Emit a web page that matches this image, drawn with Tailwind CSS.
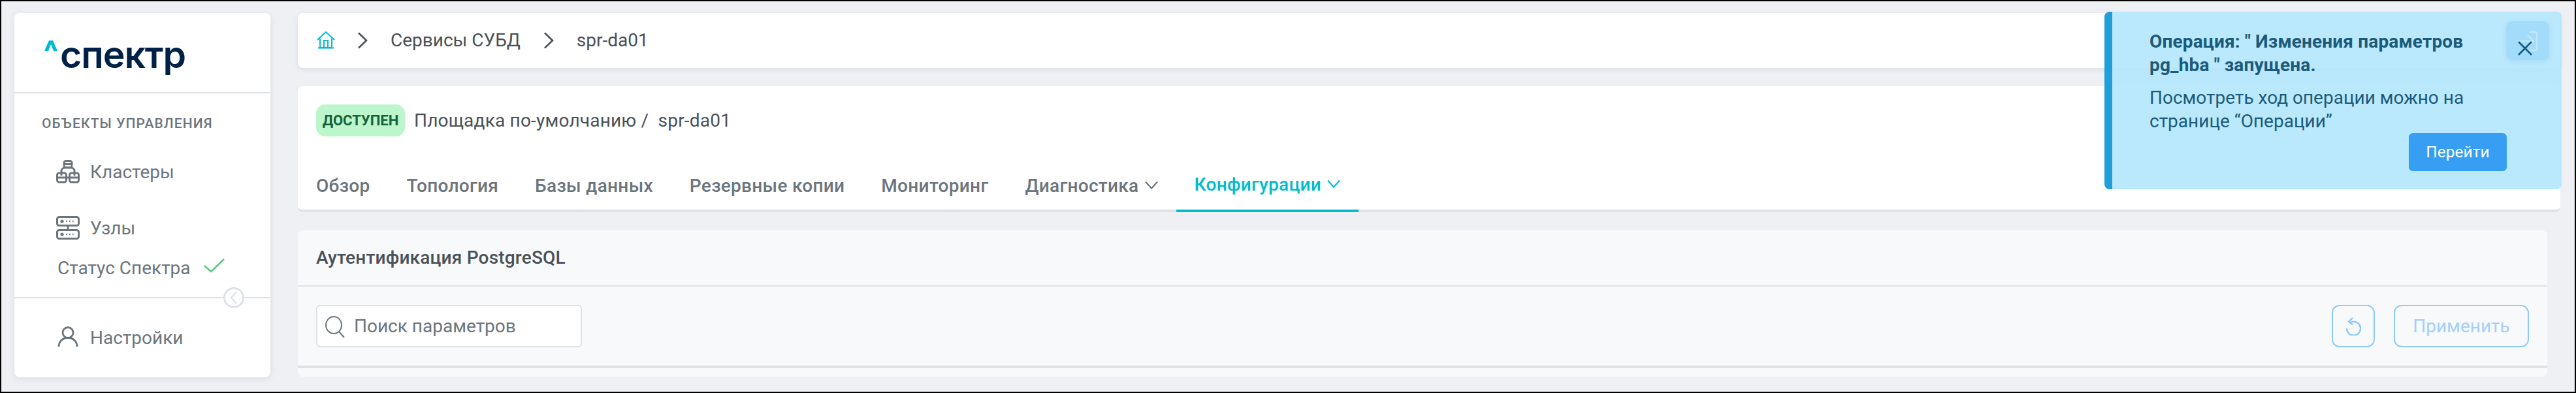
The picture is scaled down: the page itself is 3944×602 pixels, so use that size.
<!DOCTYPE html>
<html lang="ru">
<head>
<meta charset="utf-8"/>
<title>Спектр - spr-da01</title>
<script src="https://cdn.jsdelivr.net/npm/@tailwindcss/browser@4"></script>
</head>
<body class="font-[Roboto,sans-serif]">
<div class="relative flex w-[3944px] h-[602px] border-2 border-black bg-[#eef0f4] pl-[20px] pt-[18px] overflow-hidden">

  <!-- sidebar -->
  <aside class="w-[392px] h-[558px] shrink-0 rounded-[8px] bg-white shadow-[0_2px_10px_rgba(60,70,90,0.12)] flex flex-col text-[28px] text-[#6c757d]">
    <div class="h-[123px] shrink-0 border-b-2 border-[#dee2e6] flex items-start pl-[46px] pt-[34px]">
      <svg class="w-[20px] h-[16px] mt-[8px]" viewBox="0 0 20 16"><path d="M0 16 L7 0 L13 0 L20 16 L14 16 L10 6 L6 16 Z" fill="#00bcce"/></svg>
      <span class="ml-[4px] text-[57px] leading-[60px] font-[Inter,sans-serif] font-semibold text-[#002147] tracking-[-1px]">спектр</span>
    </div>
    <div class="pl-[42px] pt-[34px] text-[21px] leading-[24px] font-medium tracking-[1.1px]">ОБЪЕКТЫ УПРАВЛЕНИЯ</div>
    <div class="flex items-center pl-[64px] mt-[44px] h-[36px] gap-[16px]">
      <svg class="w-[36px] h-[36px]" viewBox="0 0 36 36" fill="none" stroke="#6c757d" stroke-width="3"><rect x="12" y="1.5" width="12" height="10" rx="3"/><path d="M12 6.5h12" /><path d="M8 24v-7a5 5 0 0 1 5-5h10a5 5 0 0 1 5 5v7"/><rect x="1.5" y="20" width="14" height="14" rx="3"/><rect x="20.5" y="20" width="14" height="14" rx="3"/><path d="M1.5 27h14M20.5 27h14M15.5 27h5"/></svg>
      <span class="leading-[36px] mt-[2px]">Кластеры</span>
    </div>
    <div class="flex items-center pl-[64px] mt-[50px] h-[36px] gap-[16px]">
      <svg class="w-[36px] h-[36px]" viewBox="0 0 36 36" fill="none" stroke="#6c757d" stroke-width="3"><rect x="1.5" y="1.5" width="33" height="13" rx="3"/><rect x="1.5" y="21.5" width="33" height="13" rx="3"/><path d="M18 14.5v7"/><circle cx="9" cy="8" r="2.6" fill="#6c757d" stroke="none"/><circle cx="9" cy="28" r="2.6" fill="#6c757d" stroke="none"/><path d="M15 8h1.6M20 8h1.6M25 8h1.6M15 28h1.6M20 28h1.6M25 28h1.6" stroke-width="2.4"/></svg>
      <span class="leading-[36px] mt-[2px]">Узлы</span>
    </div>
    <div class="flex items-center pl-[66px] mt-[26px] h-[36px]">
      <span class="leading-[36px]">Статус Спектра</span>
      <svg class="ml-[20px] mb-[8px] w-[32px] h-[22px]" viewBox="0 0 32 22" fill="none" stroke="#5cc982" stroke-width="2.6"><path d="M1 11l10 9L31 1"/></svg>
    </div>
    <div class="relative mt-[26px] border-t-2 border-[#dee2e6]">
      <div class="absolute left-[320px] top-[-17px] w-[32px] h-[32px] rounded-full border-[3px] border-[#dee2e6] bg-white flex items-center justify-center">
        <svg class="w-[12px] h-[20px]" viewBox="0 0 12 20" fill="none" stroke="#dee2e6" stroke-width="2.4"><path d="M10 1L2 10l8 9"/></svg>
      </div>
    </div>
    <div class="flex items-center pl-[66px] mt-[42px] h-[36px] gap-[18px]">
      <svg class="w-[32px] h-[32px] mt-[-2px]" viewBox="0 0 32 32" fill="none" stroke="#6c757d" stroke-width="2.8"><circle cx="16" cy="9.5" r="8"/><path d="M2 31c0-8 6-13.500 14-13.500S30 23 30 31"/></svg>
      <span class="leading-[36px] mt-[2px]">Настройки</span>
    </div>
  </aside>

  <!-- content -->
  <main class="ml-[42px] w-[3464px] flex flex-col text-[28px] text-[#495057]">
    <div class="h-[84px] shrink-0 rounded-[8px] bg-white shadow-[0_2px_8px_rgba(60,70,90,0.10)] flex items-center pl-[29px]">
      <svg class="w-[28px] h-[28px] mt-[-2px]" viewBox="0 0 28 28" fill="none" stroke="#00bcce" stroke-width="2"><path d="M1 14L14 2l13 12"/><path d="M5 12v14h18V12"/><path d="M11 26V15h6v11M2 26.500h24"/></svg>
      <svg class="ml-[34px] w-[16px] h-[26px]" viewBox="0 0 16 26" fill="none" stroke="#495057" stroke-width="2.600"><path d="M2 1.500L14 13 2 24.500"/></svg>
      <span class="ml-[35px] leading-[30px]">Сервисы СУБД</span>
      <svg class="ml-[35px] w-[16px] h-[26px]" viewBox="0 0 16 26" fill="none" stroke="#495057" stroke-width="2.600"><path d="M2 1.500L14 13 2 24.500"/></svg>
      <span class="ml-[35px] leading-[30px]">spr-da01</span>
    </div>

    <div class="mt-[28px] h-[193px] shrink-0 rounded-[8px] bg-white border-b-4 border-[#dee2e6] flex flex-col">
      <div class="flex items-center pl-[28px] pt-[28px]">
        <span class="w-[136px] h-[49px] rounded-[14px] bg-[#bdf5cc] text-[#14633a] text-[22px] font-bold flex items-center justify-center">ДОСТУПЕН</span>
        <span class="ml-[14px] tracking-[0.2px]">Площадка по-умолчанию /&nbsp; spr-da01</span>
      </div>
      <div class="flex mt-[auto] h-[80px] mb-[-4px] font-medium text-[#6c757d] tracking-[0.3px]">
        <span class="px-[28px] flex items-center">Обзор</span>
        <span class="px-[28px] flex items-center">Топология</span>
        <span class="px-[28px] flex items-center">Базы данных</span>
        <span class="px-[28px] flex items-center">Резервные копии</span>
        <span class="px-[28px] flex items-center">Мониторинг</span>
        <span class="px-[28px] flex items-center gap-[9px]">Диагностика
          <svg class="w-[20px] h-[13px] mt-[-4px]" viewBox="0 0 20 13" fill="none" stroke="#6c757d" stroke-width="2.200"><path d="M1 1.500l9 10 9-10"/></svg>
        </span>
        <span class="px-[28px] flex items-center gap-[9px] text-[#00bcce] border-b-4 border-[#00bcce]">Конфигурации
          <svg class="w-[20px] h-[13px] mt-[-4px]" viewBox="0 0 20 13" fill="none" stroke="#00bcce" stroke-width="2.200"><path d="M1 1.500l9 10 9-10"/></svg>
        </span>
      </div>
    </div>

    <div class="mt-[28px] mr-[20px] h-[224px] shrink-0 rounded-[8px] bg-[#f8f9fa] flex flex-col">
      <div class="h-[86px] shrink-0 border-b-2 border-[#dee2e6] pl-[28px] flex items-center font-medium tracking-[0.2px]">Аутентификация PostgreSQL</div>
      <div class="h-[125px] shrink-0 border-b-4 border-[#dee2e6] flex items-start justify-between pl-[28px] pr-[28px] pt-[28px]">
        <div class="w-[407px] h-[65px] rounded-[6px] border-2 border-[#dee2e6] bg-white flex items-center pl-[12px] text-[#6c757d]">
          <svg class="w-[30px] h-[34px] mt-[2px]" viewBox="0 0 30 34" fill="none" stroke="#6c757d" stroke-width="2"><ellipse cx="13" cy="14" rx="12" ry="13"/><path d="M21 24l8 9"/></svg>
          <span class="ml-[14px]">Поиск параметров</span>
        </div>
        <div class="flex gap-[29px]">
          <div class="w-[66px] h-[65px] rounded-[12px] border-2 border-[#90caf9] flex items-center justify-center">
            <svg class="w-[24px] h-[28px]" viewBox="0 0 24 28" fill="none" stroke="#90caf9" stroke-width="2.500"><path d="M6 9a10.500 10.500 0 1 1-4 8"/><path d="M11 1L5 6.500l6 5"/></svg>
          </div>
          <div class="w-[207px] h-[65px] rounded-[12px] border-2 border-[#90caf9] flex items-center justify-center text-[#a3cffa]">Применить</div>
        </div>
      </div>
    </div>
  </main>

  <!-- toast -->
  <div class="absolute left-[3220px] top-[16px] w-[700px] h-[272px] rounded-[8px] border-l-[12px] border-[#219fd9] bg-[#b3e5fc]/90 text-[28px] leading-[36px] text-[#1b5a7a] pl-[57px] pt-[28px]">
    <div class="w-[500px] font-bold tracking-[0.15px]">Операция: " Изменения параметров pg_hba " запущена.</div>
    <div class="w-[500px] mt-[14px]">Посмотреть ход операции можно на странице “Операции”</div>
    <div class="absolute left-[454px] top-[186px] w-[150px] h-[58px] rounded-[6px] bg-[#369ff3] text-white text-[24.5px] flex items-center justify-center">Перейти</div>
    <div class="absolute left-[603px] top-[14px] w-[66px] h-[60px] rounded-[10px] bg-[#a3dcfb] shadow-[0_2px_6px_rgba(120,190,240,0.3)]">
      <svg class="absolute left-[18px] top-[16px] w-[30px] h-[40px]" viewBox="0 0 30 40" fill="none" stroke="#bfe8fd" stroke-width="2.500"><path d="M18 1h8a3 3 0 0 1 3 3v22a3 3 0 0 1-3 3h-8"/><path d="M0 15h24M15 6l9 9-9 9"/></svg>
      <svg class="absolute left-[18px] top-[31px] w-[22px] h-[22px]" viewBox="0 0 22 22" fill="none" stroke="#145a7c" stroke-width="2.500"><path d="M1 1l20 20M21 1L1 21"/></svg>
    </div>
  </div>
</div>
</body>
</html>
